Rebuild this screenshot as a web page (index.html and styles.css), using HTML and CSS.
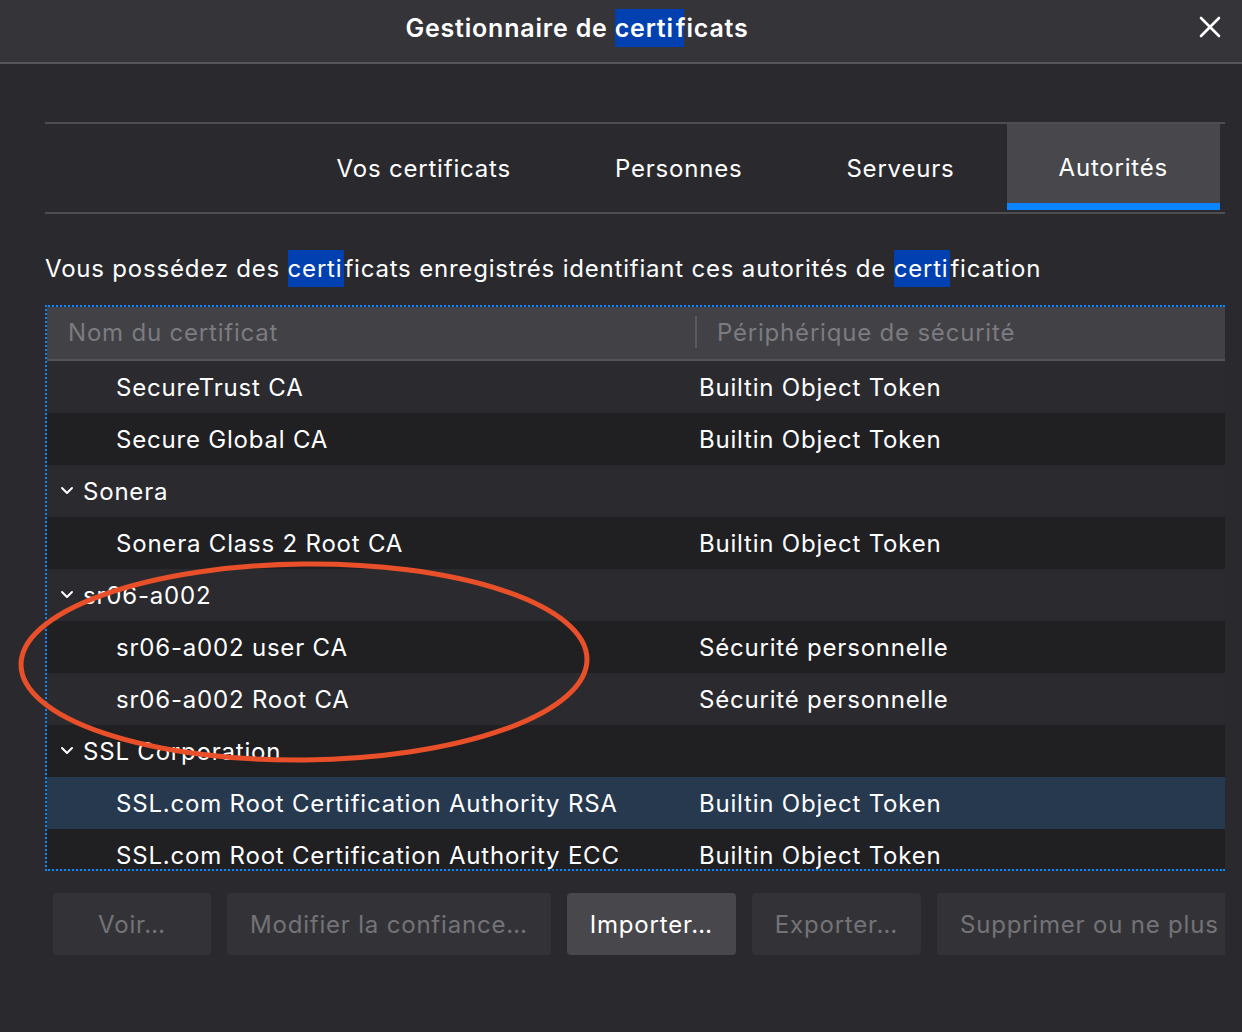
FILE: index.html
```html
<!DOCTYPE html>
<html lang="fr">
<head>
<meta charset="utf-8">
<title>Gestionnaire de certificats</title>
<link rel="stylesheet" href="styles.css">
</head>
<body>
<div class="window">
  <header class="titlebar">
    <h1 class="title">Gestionnaire de <mark class="hl hl-title">certi</mark>ficats</h1>
    <svg class="close" width="24" height="24" viewBox="0 0 24 24"><path d="M3 3 L21 21 M21 3 L3 21" stroke="#fff" stroke-width="2.6" stroke-linecap="round" fill="none"/></svg>
  </header>
  <main class="content">
    <nav class="tabs">
      <div class="tab">Vos certificats</div>
      <div class="tab">Personnes</div>
      <div class="tab">Serveurs</div>
      <div class="tab active">Autorités</div>
    </nav>
    <p class="desc">Vous possédez des <mark class="hl">certi</mark>ficats enregistrés identifiant ces autorités de <mark class="hl">certi</mark>fication</p>
    <div class="table">
      <div class="thead">
        <div class="th th1">Nom du certificat</div>
        <div class="th th2">Périphérique de sécurité</div>
      </div>
      <div class="tbody">
        <div class="row light"><div class="c1 child">SecureTrust CA</div><div class="c2">Builtin Object Token</div></div>
        <div class="row dark"><div class="c1 child">Secure Global CA</div><div class="c2">Builtin Object Token</div></div>
        <div class="row light"><div class="c1 group"><svg class="chev" width="14" height="10" viewBox="0 0 14 10"><polyline points="2,2 7,7 12,2" fill="none" stroke="#fff" stroke-width="2" stroke-linecap="round" stroke-linejoin="round"/></svg>Sonera</div><div class="c2"></div></div>
        <div class="row dark"><div class="c1 child">Sonera Class 2 Root CA</div><div class="c2">Builtin Object Token</div></div>
        <div class="row light"><div class="c1 group"><svg class="chev" width="14" height="10" viewBox="0 0 14 10"><polyline points="2,2 7,7 12,2" fill="none" stroke="#fff" stroke-width="2" stroke-linecap="round" stroke-linejoin="round"/></svg>sr06-a002</div><div class="c2"></div></div>
        <div class="row dark"><div class="c1 child">sr06-a002 user CA</div><div class="c2">Sécurité personnelle</div></div>
        <div class="row light"><div class="c1 child">sr06-a002 Root CA</div><div class="c2">Sécurité personnelle</div></div>
        <div class="row dark"><div class="c1 group"><svg class="chev" width="14" height="10" viewBox="0 0 14 10"><polyline points="2,2 7,7 12,2" fill="none" stroke="#fff" stroke-width="2" stroke-linecap="round" stroke-linejoin="round"/></svg>SSL Corporation</div><div class="c2"></div></div>
        <div class="row selected"><div class="c1 child">SSL.com Root Certification Authority RSA</div><div class="c2">Builtin Object Token</div></div>
        <div class="row dark"><div class="c1 child">SSL.com Root Certification Authority ECC</div><div class="c2">Builtin Object Token</div></div>
      </div>
    </div>
    <div class="buttons">
      <button class="btn btn-voir" disabled>Voir…</button>
      <button class="btn" disabled>Modifier la confiance…</button>
      <button class="btn primary">Importer…</button>
      <button class="btn" disabled>Exporter…</button>
      <button class="btn" disabled>Supprimer ou ne plus faire confiance…</button>
    </div>
  </main>
  <svg class="annotation" width="1242" height="1032" viewBox="0 0 1242 1032">
    <ellipse cx="304" cy="662" rx="283" ry="98" transform="rotate(-0.6 304 662)" fill="none" stroke="#e9502a" stroke-width="5"/>
  </svg>
</div>
</body>
</html>
```
FILE: styles.css
```css
* { box-sizing: border-box; }
html, body { margin: 0; padding: 0; }
body {
  background: #2a2a2e;
  font-family: Inter, "Noto Sans", "Liberation Sans", sans-serif;
  color: #ffffff;
}
.window {
  position: relative;
  width: 1242px;
  height: 1032px;
  overflow: hidden;
  background: #2a2a2e;
}
.titlebar {
  height: 64px;
  background: #343439;
  border-bottom: 2px solid #58585c;
  display: flex;
  align-items: center;
  justify-content: center;
  position: relative;
}
.title {
  margin: 0;
  font-size: 25px;
  font-weight: 600;
  letter-spacing: 0.8px;
  color: #fff;
  margin-left: -88px;
  margin-top: -6px;
}
.hl {
  background: #0040b0;
  color: #fff;
  padding: 4px 2px 4px 0;
}
.hl-title {
  box-shadow: 8px 0 0 #0040b0;
}
.close {
  position: absolute;
  right: 20px;
  top: 15px;
}
.content {
  padding: 58px 17px 0 45px;
}
.tabs {
  display: flex;
  justify-content: flex-end;
  border-top: 2px solid #4e4e52;
  border-bottom: 2px solid #4e4e52;
  height: 92px;
  padding-right: 5px;
}
.tab {
  padding: 0 52px;
  display: flex;
  align-items: center;
  font-size: 24px;
  letter-spacing: 0.8px;
  color: #fff;
}
.tab.active {
  background: #48484c;
  box-shadow: inset 0 -7px 0 #0a84ff;
  margin-bottom: 2px;
}
.desc {
  margin: 38px 0 0 0;
  font-size: 24px;
  letter-spacing: 0.8px;
  line-height: 34px;
  color: #fff;
}
.table {
  margin-top: 19px;
  border: 2px dotted #0a84ff;
  border-right: none;
  height: 566px;
  display: flex;
  flex-direction: column;
  overflow: hidden;
}
.thead {
  height: 54px;
  flex: none;
  background: #424246;
  border-bottom: 2px solid #555559;
  padding-bottom: 2px;
  display: grid;
  grid-template-columns: 648px 1fr;
  align-items: center;
}
.th {
  font-size: 24px;
  letter-spacing: 0.8px;
  color: #7b7b80;
}
.th1 { padding-left: 21px; }
.th2 {
  padding-left: 20px;
  border-left: 2px solid #5a5a5e;
  height: 32px;
  display: flex;
  align-items: center;
}
.tbody { flex: 1; overflow: hidden; }
.row {
  height: 52px;
  display: grid;
  grid-template-columns: 652px 1fr;
  align-items: center;
  font-size: 24px;
  letter-spacing: 0.8px;
}
.row.light { background: #2b2b2f; }
.row.dark { background: #202023; }
.row.selected { background: #27394f; }
.c1.child { padding-left: 69px; }
.c1.group {
  padding-left: 13px;
  display: flex;
  align-items: center;
  gap: 9px;
}
.chev { flex: none; }
.buttons {
  margin-top: 22px;
  padding-left: 8px;
  display: flex;
  gap: 16px;
  overflow: hidden;
  width: 1180px;
}
.btn {
  flex: none;
  height: 62px;
  padding: 0 23px;
  border: none;
  border-radius: 4px;
  background: #333337;
  color: #737377;
  font-family: inherit;
  font-size: 24px;
  letter-spacing: 0.8px;
}
.btn-voir { min-width: 158px; }
.btn.primary { background: #48484c; color: #fff; }
.annotation {
  position: absolute;
  left: 0;
  top: 0;
  pointer-events: none;
}
```
